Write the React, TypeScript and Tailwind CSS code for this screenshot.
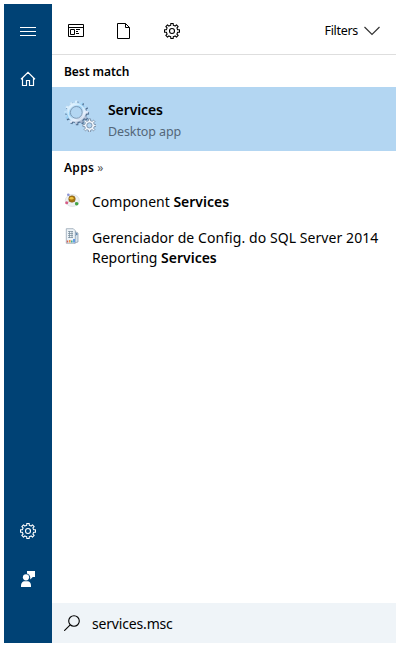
import type { ReactNode } from 'react';

function gearPath(cx: number, cy: number, outer: number, inner: number, teeth: number, top = 0.2, base = 0.3) {
  const points: string[] = [];
  for (let i = 0; i < teeth; i++) {
    const mid = -Math.PI / 2 + (i * 2 * Math.PI) / teeth;
    const step = (2 * Math.PI) / teeth;
    const corners: [number, number][] = [
      [inner, -base],
      [outer, -top],
      [outer, top],
      [inner, base],
    ];
    for (const [r, a] of corners) {
      points.push(`${(cx + r * Math.cos(mid + a * step)).toFixed(2)} ${(cy + r * Math.sin(mid + a * step)).toFixed(2)}`);
    }
  }
  return `M${points.join('L')}Z`;
}

function Gear() {
  return (
    <svg className="block size-4" viewBox="0 0 16 16" fill="none" stroke="currentColor" strokeWidth="1.1" strokeLinejoin="round">
      <path d={gearPath(8, 8, 7.6, 5.8, 8, 0.2, 0.28)} />
      <circle cx="8" cy="8" r="2.5" />
    </svg>
  );
}

function Menu() {
  return (
    <svg className="block size-4" viewBox="0 0 16 16" fill="none" stroke="currentColor">
      <path d="M0 3.5h16M0 7.5h16M0 11.5h16" />
    </svg>
  );
}

function Home() {
  return (
    <svg className="block size-4" viewBox="0 0 16 16" fill="none" stroke="currentColor" strokeWidth="1.2">
      <path d="M1 8.2 8 1.4l7 6.8M2.5 7v7.5h4v-5h3v5h4V7" />
    </svg>
  );
}

function Feedback() {
  return (
    <svg className="block size-4" viewBox="0 0 16 16" fill="currentColor">
      <path d="M7 0h8v6h-2.200L10.200 8.400V6A4.200 4.200 0 0 0 7 2.400Z" />
      <circle cx="6" cy="6.300" r="3.100" />
      <path d="M1 16v-1.500C1 12 2.800 10.200 4.200 10.200h3.600C9.500 10.200 11 12 11 14.500V16Z" />
    </svg>
  );
}

function AppWindow() {
  return (
    <svg className="block size-4" viewBox="0 0 16 16" fill="none" stroke="currentColor">
      <path d="M.5 1.500h15v12H.5ZM.5 4.500h15M2.500 6.500h4v5h-4ZM8 6.500h4M8 8.500h2M8 10.500h3" />
    </svg>
  );
}

function DocumentIcon() {
  return (
    <svg className="block size-4" viewBox="0 0 16 16" fill="none" stroke="currentColor">
      <path d="M1.500.5h8l4 4v11h-12ZM9.500.5v4h4" />
    </svg>
  );
}

function ServicesIcon() {
  return (
    <svg className="block size-8 shrink-0" viewBox="0 0 32 32">
      <defs>
        <linearGradient id="steel" x1="0" y1="0" x2=".7" y2="1">
          <stop offset="0" stopColor="#79a9cf" />
          <stop offset=".25" stopColor="#e0f2ff" />
          <stop offset=".5" stopColor="#8fccf3" />
          <stop offset=".75" stopColor="#e6eefc" />
          <stop offset="1" stopColor="#8a9dbb" />
        </linearGradient>
      </defs>
      <path d={gearPath(13.1, 13.4, 12, 9.8, 12, 0.19, 0.27)} fill="#4d6c8e" />
      <path d={gearPath(12.3, 12.4, 12, 9.8, 12, 0.17, 0.25)} fill="url(#steel)" />
      <circle cx="12.300" cy="12.400" r="8.200" fill="none" stroke="#e7f5ff" strokeWidth="1.500" opacity=".65" />
      <circle cx="12.300" cy="12.400" r="5.900" fill="#b3d6f2" stroke="#7f9bb6" />
      <path d={gearPath(25.5, 25.5, 6.7, 4.9, 8, 0.2, 0.28)} fill="#f0f6fc" stroke="#647a94" strokeWidth=".7" />
      <circle cx="25.400" cy="25.400" r="2.600" fill="#b3d6f2" stroke="#7d91aa" strokeWidth=".9" />
    </svg>
  );
}

function ComponentIcon() {
  return (
    <svg className="block size-4" viewBox="0 0 16 16">
      <ellipse cx="8.300" cy="8.500" rx="7" ry="6" fill="#eef1f2" stroke="#d5dadd" strokeWidth=".7" />
      <path d="m4 2.500 3.500 4 5 5M3 11l5-4" stroke="#b9bbb8" strokeWidth=".7" />
      <circle cx="8" cy="7" r="3.300" fill="#a87510" stroke="#79561b" strokeWidth=".5" />
      <ellipse cx="7.500" cy="6.300" rx="2" ry="1.300" fill="#eec441" />
      <circle cx="4.300" cy="2.800" r="1.300" fill="#8c94d6" />
      <circle cx="2.700" cy="10.800" r="1.500" fill="#d75c86" />
      <circle cx="12.700" cy="11.800" r="1.800" fill="#41a444" />
    </svg>
  );
}

function ReportIcon() {
  return (
    <svg className="block size-4" viewBox="0 0 16 16">
      <path d="m10 3 4 2v9l-4 1Z" fill="#d8e5f0" stroke="#71859b" strokeWidth=".6" />
      <path d="M2.300.7h7l2 2v12.600h-9Z" fill="#edf3f8" stroke="#8a9baa" strokeWidth=".7" />
      <path d="M4 3.500h5M4 5.500h5M4 7.500h5M4 9.500h5M5.500 3v7M8 3v7" stroke="#76899a" strokeWidth=".7" />
      <path d="M3.500 12.500v2" stroke="#d45b55" strokeWidth="1.500" />
      <path d="M5.800 12v2.500" stroke="#e79b3c" strokeWidth="1.500" />
      <path d="M7.800 12.500v2" stroke="#34a68a" strokeWidth="1.500" />
      <path d="M10 11v3.500" stroke="#397fe1" strokeWidth="1.500" />
      <path d="m11.500 5 1.800 1.200-1.800 1" fill="none" stroke="#557ca8" />
    </svg>
  );
}

function Result({ icon, children }: { icon: ReactNode; children: ReactNode }) {
  return (
    <div className="flex gap-3 px-3 py-2">
      <div className="shrink-0">{icon}</div>
      <div className="text-[14px] leading-5 whitespace-nowrap">{children}</div>
    </div>
  );
}

export default function App() {
  return (
    <div className="h-[649px] w-[401px] bg-white pt-1 pr-[5px] pb-1.5 pl-1 font-['Noto_Sans',sans-serif] text-black">
      <div className="flex h-full">
        <nav className="flex w-12 shrink-0 flex-col items-center bg-[#004275] pt-5 pb-14 text-white">
          <Menu />
          <div className="mt-[31px]"><Home /></div>
          <div className="mt-auto"><Gear /></div>
          <div className="mt-8"><Feedback /></div>
        </nav>
        <main className="flex min-w-0 flex-1 flex-col">
          <header className="flex h-[51px] shrink-0 items-center border-b border-[#dedede] pt-1 pl-4">
            <AppWindow />
            <div className="ml-8"><DocumentIcon /></div>
            <div className="ml-8"><Gear /></div>
            <button className="mr-4 ml-auto flex items-center gap-1.5 text-[12.5px] tracking-[-0.3px]">
              <span>Filters</span>
              <svg className="block size-4" viewBox="0 0 16 16" fill="none" stroke="#333" strokeWidth="1.200">
                <path d="m.5 4 7.500 7.500L15.500 4" />
              </svg>
            </button>
          </header>
          <h2 className="h-8 pl-3 text-[12px] leading-[33px] font-semibold tracking-[-0.05px]">Best match</h2>
          <section className="flex h-16 items-start gap-3 bg-[#b3d6f2] pt-[13px] pl-3">
            <ServicesIcon />
            <div>
              <div className="text-[14px] leading-5 font-semibold tracking-[-0.1px]">Services</div>
              <div className="mt-0.5 text-[12.5px] leading-5 tracking-[-0.1px] text-[#536779]">Desktop app</div>
            </div>
          </section>
          <h2 className="mb-px h-8 pl-3 text-[12px] leading-[33px] font-semibold">
            <span className="tracking-[0.3px]">Apps</span> <span className="font-normal text-[#555]">»</span>
          </h2>
          <Result icon={<ComponentIcon />}>Component <b className="font-semibold">Services</b></Result>
          <Result icon={<ReportIcon />}>
            <span className="tracking-[0.07px]">Gerenciador de Config. do SQL Server 2014</span><br />
            Reporting <b className="font-semibold">Services</b>
          </Result>
          <footer className="mt-auto flex h-10 items-center gap-3 bg-[#eff4f8] pl-3 text-[14px]">
            <svg className="block size-4" viewBox="0 0 16 16" fill="none" stroke="currentColor" strokeWidth="1.100">
              <circle cx="10" cy="6" r="5.300" />
              <path d="m6.200 9.800-6 6" />
            </svg>
            <span className="tracking-[-0.17px]">services.msc</span>
          </footer>
        </main>
      </div>
    </div>
  );
}
